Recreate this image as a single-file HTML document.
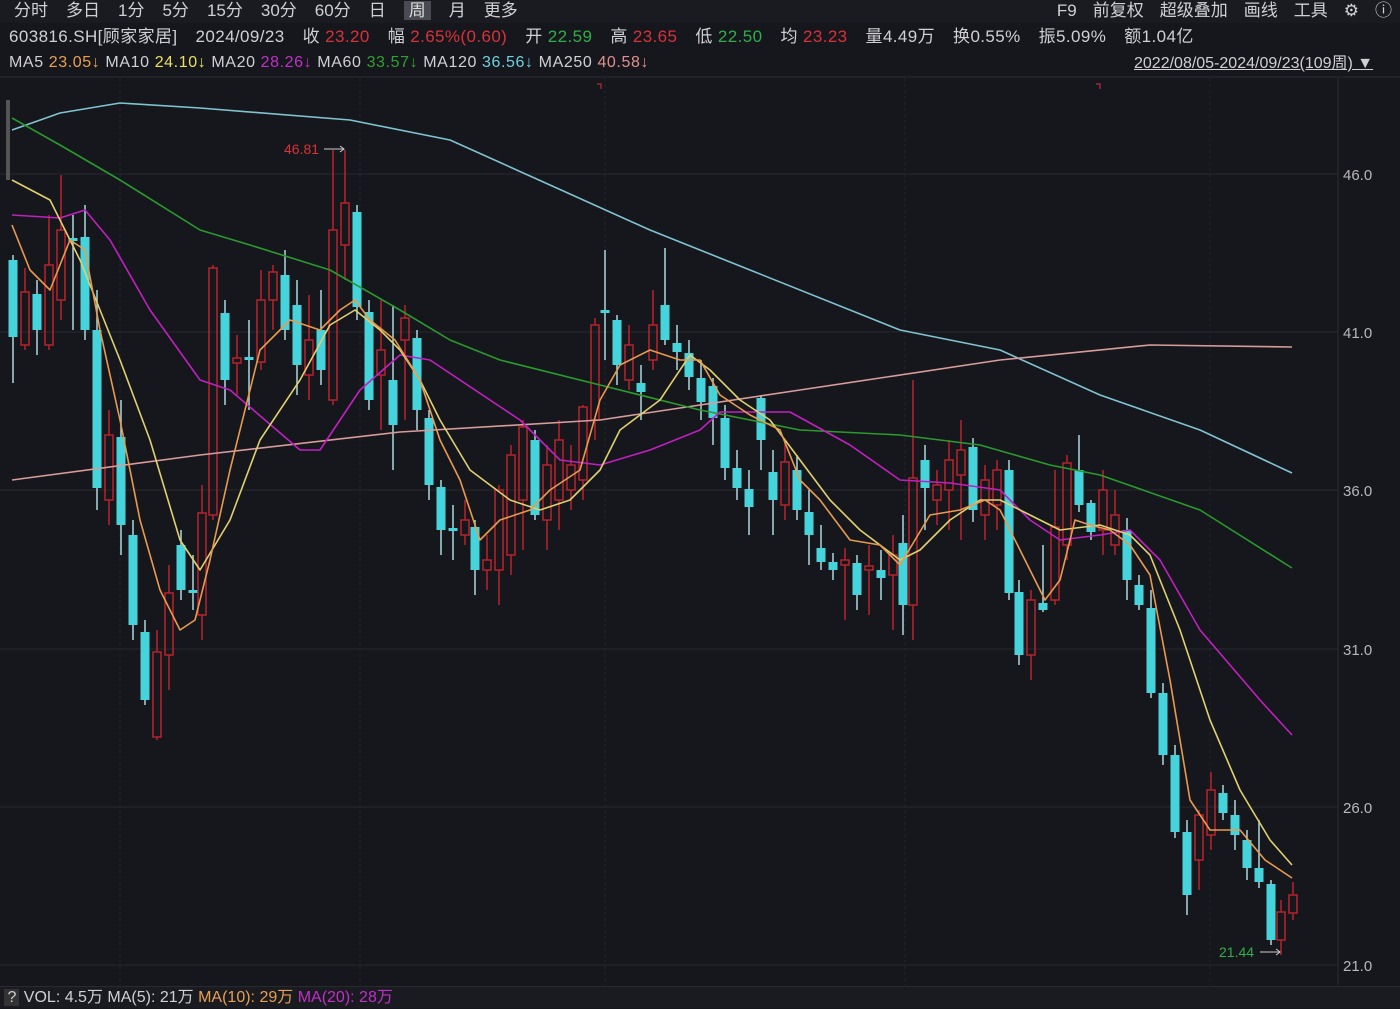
<!DOCTYPE html>
<html><head><meta charset="utf-8"><style>
*{margin:0;padding:0;box-sizing:border-box}
body{width:1400px;height:1008px;background:#16171c;overflow:hidden;font-family:"Liberation Sans","Noto Sans CJK SC",sans-serif;color:#d0d0d4;position:relative}
.row{position:absolute;left:0;height:24px;line-height:24px;font-size:17px;white-space:nowrap}
.r1{top:-1px;background:#1a1b20;width:1400px;padding-left:14px}
.r1 span{margin-right:18px}
.sel{background:#4a4b52;color:#ddd;padding:0 5px}
.r2{top:25px;left:9px;letter-spacing:0.4px}
.r2 span{margin-right:18px}
.r3{top:51px;left:9px;font-size:16px;letter-spacing:0.6px}
.red{color:#d8323a}.grn{color:#2fae4a}
.tr{position:absolute;top:-1px;right:8px;height:24px;line-height:24px;font-size:17px}
.tr span{margin-left:16px}
.bot{position:absolute;left:0;top:986px;height:22px;width:1400px;background:#1a1b20;font-size:16px;line-height:22px;border-top:1px solid #2a2b31}
svg{position:absolute;left:0;top:0}
</style></head><body>
<div class="row r1"><span>分时</span><span>多日</span><span>1分</span><span>5分</span><span>15分</span><span>30分</span><span>60分</span><span>日</span><span class="sel">周</span><span>月</span><span>更多</span></div>
<div class="tr"><span>F9</span><span>前复权</span><span>超级叠加</span><span>画线</span><span>工具</span><span>⚙</span><span>ⓘ</span></div>
<div class="row r2"><span>603816.SH[顾家家居]</span><span>2024/09/23</span><span>收 <i class="red" style="font-style:normal">23.20</i></span><span>幅 <i class="red" style="font-style:normal">2.65%(0.60)</i></span><span>开 <i class="grn" style="font-style:normal">22.59</i></span><span>高 <i class="red" style="font-style:normal">23.65</i></span><span>低 <i class="grn" style="font-style:normal">22.50</i></span><span>均 <i class="red" style="font-style:normal">23.23</i></span><span>量4.49万</span><span>换0.55%</span><span>振5.09%</span><span>额1.04亿</span></div>
<div class="row r3">MA5 <span style="color:#e8a050">23.05↓</span> MA10 <span style="color:#e8e060">24.10↓</span> MA20 <span style="color:#c030c8">28.26↓</span> MA60 <span style="color:#30a030">33.57↓</span> MA120 <span style="color:#70d0e0">36.56↓</span> MA250 <span style="color:#e09090">40.58↓</span></div>
<div style="position:absolute;top:52px;left:1134px;font-size:16px;line-height:24px;text-decoration:underline;color:#d0d0d4;white-space:nowrap">2022/08/05-2024/09/23(109周) ▼</div>
<div class="bot">&nbsp;<span style="background:#333;padding:0 3px">?</span> VOL: 4.5万 MA(5): 21万 <span style="color:#e8a050">MA(10): 29万</span> <span style="color:#c030c8">MA(20): 28万</span></div>
<svg id="c" width="1400" height="1008" style="top:0"></svg>
<script>
var s='';
s+='<line x1="0" y1="77" x2="1400" y2="77" stroke="#2a2b31"/>';
[174,332,490,649,807,965].forEach(function(y,i){s+='<line x1="0" y1="'+y+'" x2="1338" y2="'+y+'" stroke="#26282e"/>';s+='<text x="1343" y="'+(y+6)+'" fill="#b8b8bc" font-size="15" font-family="Liberation Sans">'+['46.0','41.0','36.0','31.0','26.0','21.0'][i]+'</text>';});
[120,360,605,905,1210].forEach(function(x){s+='<line x1="'+x+'" y1="78" x2="'+x+'" y2="985" stroke="#24262c" stroke-dasharray="3,3"/>';});
s+='<line x1="1338" y1="78" x2="1338" y2="985" stroke="#2c2e34"/>';
s+='<rect x="6" y="100" width="4" height="80" fill="#555"/>';
s+='<path d="M597 84h4v5M1096 84h4v5" stroke="#d8323a" fill="none"/>';
var C=[[13,'c',260,337,255,383],[25,'r',292,345,268,350],[37,'c',294,330,280,355],[49,'r',265,345,215,350],[61,'r',230,300,175,320],[73,'c',238,241,215,330],[85,'c',237,330,205,340],[97,'c',330,488,290,510],[109,'r',435,500,410,525],[121,'c',437,525,400,555],[133,'c',535,625,520,640],[145,'c',632,700,620,705],[157,'r',652,737,630,740],[169,'r',593,655,565,690],[181,'c',545,590,530,600],[193,'c',590,593,555,610],[202,'r',513,615,485,640],[213,'r',268,515,265,520],[225,'c',313,380,300,405],[237,'r',358,363,335,395],[249,'c',357,360,320,410],[261,'r',300,362,270,370],[273,'r',272,300,265,330],[285,'c',275,330,250,340],[297,'c',305,365,280,395],[309,'r',340,375,295,400],[321,'c',330,370,290,385],[333,'r',230,400,150,405],[345,'r',203,245,150,280],[357,'c',212,307,205,320],[369,'c',312,400,300,410],[381,'r',350,375,300,430],[393,'c',380,425,305,470],[405,'r',318,340,305,420],[417,'c',338,410,330,430],[429,'c',418,485,410,500],[441,'c',487,530,480,555],[453,'c',528,531,505,560],[465,'r',520,535,500,545],[475,'c',527,570,520,595],[487,'r',560,570,535,590],[499,'r',490,570,485,605],[511,'r',455,555,445,575],[523,'r',427,500,420,550],[535,'c',440,515,430,520],[547,'r',465,520,445,550],[559,'r',440,500,420,530],[571,'r',465,490,445,510],[583,'r',407,480,405,500],[595,'r',325,420,318,440],[605,'c',310,313,250,360],[617,'c',320,365,315,385],[629,'r',345,380,325,390],[641,'c',383,392,365,420],[653,'r',325,360,290,370],[665,'c',305,340,248,345],[677,'c',343,352,325,370],[689,'c',353,377,340,390],[701,'c',378,402,360,420],[713,'c',386,418,378,445],[725,'c',418,468,405,480],[737,'c',468,488,450,500],[749,'c',489,507,470,535],[761,'c',398,440,395,470],[773,'c',472,500,450,535],[785,'r',462,505,440,520],[797,'c',470,510,455,520],[809,'c',512,535,490,565],[821,'c',548,562,525,570],[833,'c',562,570,553,580],[845,'r',560,565,548,620],[857,'c',563,595,555,610],[869,'r',566,570,545,615],[881,'c',570,578,550,600],[893,'r',555,575,535,630],[903,'c',543,605,515,635],[913,'r',478,605,380,640],[925,'c',460,488,445,530],[937,'r',485,500,470,525],[949,'r',460,490,440,530],[961,'r',450,475,420,540],[973,'c',447,510,438,522],[985,'r',480,515,465,540],[997,'r',470,505,460,530],[1009,'c',470,593,460,600],[1019,'c',592,655,580,665],[1031,'r',600,655,590,680],[1043,'c',603,610,545,612],[1055,'r',527,600,470,605],[1067,'r',463,545,455,560],[1079,'c',470,505,435,512],[1091,'c',503,532,500,540],[1103,'r',490,530,470,555],[1115,'r',515,545,490,555],[1127,'c',530,580,518,600],[1139,'c',585,605,575,610],[1151,'c',608,693,590,698],[1163,'c',693,755,683,765],[1175,'c',755,832,745,838],[1187,'c',832,895,820,915],[1199,'r',815,860,810,890],[1211,'r',790,835,772,850],[1223,'c',793,813,785,820],[1235,'c',815,835,800,850],[1247,'c',840,868,830,880],[1259,'c',868,882,820,888],[1271,'c',884,940,880,945],[1281,'r',912,940,900,955],[1293,'r',895,913,882,920]];
C.forEach(function(k){var x=k[0],t=k[1];
if(t=='c'){s+='<line x1="'+x+'" y1="'+k[4]+'" x2="'+x+'" y2="'+k[5]+'" stroke="#a8d8de" stroke-width="1.5"/><rect x="'+(x-4.5)+'" y="'+k[2]+'" width="9" height="'+Math.max(2,k[3]-k[2])+'" fill="#45d4dc"/>';}
else{s+='<line x1="'+x+'" y1="'+k[4]+'" x2="'+x+'" y2="'+k[2]+'" stroke="#b8242c" stroke-width="1.5"/><line x1="'+x+'" y1="'+k[3]+'" x2="'+x+'" y2="'+k[5]+'" stroke="#b8242c" stroke-width="1.5"/><rect x="'+(x-4)+'" y="'+k[2]+'" width="8" height="'+Math.max(2,k[3]-k[2])+'" fill="none" stroke="#b8242c" stroke-width="1.5"/>';}});
function L(p,c){s+='<polyline points="'+p+'" fill="none" stroke="'+c+'" stroke-width="1.6" stroke-linejoin="round"/>';}
L('12,130 60,113 120,103 200,108 350,120 450,140 550,185 650,230 750,270 900,330 1000,350 1100,395 1200,430 1292,473','#80c4d4');
L('12,480 200,455 400,432 600,420 800,390 1000,360 1150,345 1292,347','#d89c9c');
L('12,118 60,145 120,180 200,230 250,245 330,270 400,310 450,340 500,360 600,385 700,410 800,430 900,435 980,445 1050,465 1100,475 1200,510 1292,568','#2a9a2e');
L('12,215 60,218 85,210 110,240 150,310 200,380 230,390 300,450 320,450 360,390 400,355 430,360 460,380 520,420 560,460 600,465 650,450 700,430 720,412 790,412 850,445 900,480 950,483 1000,490 1030,520 1060,540 1100,535 1130,530 1160,560 1200,630 1260,700 1292,735','#c020c0');
L('12,180 50,200 80,260 120,360 150,440 180,540 200,570 230,520 260,440 300,380 330,325 355,310 380,330 400,350 420,380 440,420 470,470 510,500 540,510 570,500 600,470 620,430 660,400 690,355 710,370 740,400 770,420 800,460 830,500 860,530 900,560 920,550 950,520 980,500 1000,500 1030,515 1060,530 1100,525 1130,535 1150,555 1180,630 1210,720 1240,790 1270,840 1292,865','#e0d070');
L('12,225 30,270 50,290 70,240 85,250 100,330 120,420 140,520 160,590 180,630 195,620 210,560 230,470 260,350 290,320 320,330 340,310 355,300 370,320 395,340 420,380 440,440 460,480 480,540 500,520 530,510 550,490 580,470 600,400 620,365 650,350 680,360 700,360 720,395 750,415 780,430 800,480 820,500 850,540 880,545 900,565 930,515 960,510 985,500 1000,510 1020,550 1045,600 1060,580 1075,520 1090,525 1110,530 1130,545 1150,575 1170,680 1190,800 1210,830 1240,830 1265,860 1292,878','#e89a50');
s+='<text x="284" y="154" fill="#d8323a" font-size="14" font-family="Liberation Sans">46.81</text><path d="M324 149h20m-4-3l4 3-4 3" stroke="#ccc" fill="none"/>';
s+='<text x="1219" y="957" fill="#2fae4a" font-size="14" font-family="Liberation Sans">21.44</text><path d="M1260 952h20m-4-3l4 3-4 3" stroke="#ccc" fill="none"/>';
document.getElementById('c').innerHTML=s;
</script>
</body></html>
